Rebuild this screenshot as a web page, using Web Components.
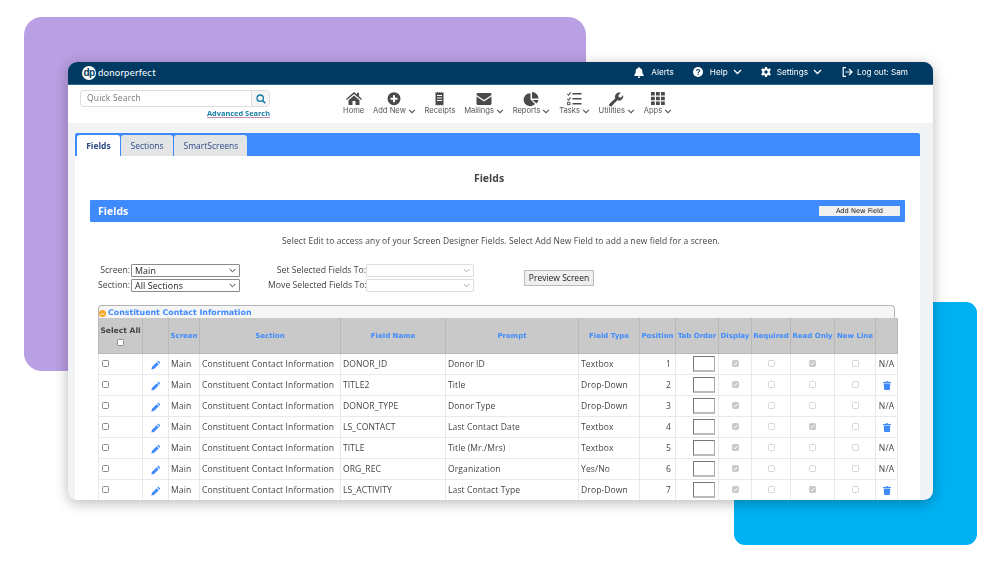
<!DOCTYPE html>
<html>
<head>
<meta charset="utf-8">
<title>Fields</title>
<style>
  html, body { margin: 0; padding: 0; background: #fff; }
  body { width: 1000px; height: 562px; overflow: hidden; font-family: "Open Sans", sans-serif; }
</style>
</head>
<body>
<dp-stage>
  <dp-window>
    <dp-topbar slot="top"></dp-topbar>
    <dp-header slot="head"></dp-header>
    <dp-panel>
      <dp-form></dp-form>
      <dp-fields-table></dp-fields-table>
    </dp-panel>
  </dp-window>
</dp-stage>

<script>
const chevron = `<svg class="chev" width="9" height="6" viewBox="0 0 9 6"><path d="M1 1l3.5 3.5L8 1" fill="none" stroke="currentColor" stroke-width="1.3"/></svg>`;

customElements.define("dp-stage", class extends HTMLElement {
  constructor() {
    super();
    this.attachShadow({ mode: "open" }).innerHTML = `
<style>
:host { display: block; position: relative; width: 1000px; height: 562px; overflow: hidden; background: #fff; }
.purple { position: absolute; left: 24px; top: 17px; width: 562px; height: 354px; border-radius: 18px; background: #b99fe3; }
.blue { position: absolute; left: 734px; top: 302px; width: 243px; height: 243px; border-radius: 11px; background: #00b1f2; }
.win { position: absolute; left: 68px; top: 62px; }
</style>
<div class="purple"></div>
<div class="blue"></div>
<div class="win"><slot></slot></div>`;
  }
});

customElements.define("dp-window", class extends HTMLElement {
  constructor() {
    super();
    this.attachShadow({ mode: "open" }).innerHTML = `
<style>
:host { display: flex; flex-direction: column; width: 865px; height: 438px; background: #f2f3f5; border-radius: 9px; overflow: hidden; box-shadow: 0 3px 14px rgba(0,0,0,.28); }
.body { flex: 1; min-height: 0; padding: 10px 13px 0 7px; overflow: hidden; filter: blur(.3px); }
</style>
<slot name="top"></slot>
<slot name="head"></slot>
<div class="body"><slot></slot></div>`;
  }
});

customElements.define("dp-topbar", class extends HTMLElement {
  constructor() {
    super();
    this.attachShadow({ mode: "open" }).innerHTML = `
<style>
:host { display: flex; align-items: center; height: 23px; background: #003a63; color: #fff; font: 8.2px Inter, "Liberation Sans", sans-serif; padding: 0 25px 2px 14px; border-bottom: 1px solid #2a6a92; box-sizing: border-box; }
.logo { width: 14px; height: 14px; margin-top: 1px; border-radius: 50%; background: #fff; color: #003a63; font: bold 10px/13px "Liberation Sans", sans-serif; letter-spacing: -.6px; text-align: center; }
.name { margin-left: 2px; font: 9.5px Lato, sans-serif; letter-spacing: .25px; flex: 1; }
.item { display: flex; align-items: center; filter: blur(.25px); }
.item svg:first-child { margin-right: 7px; }
.chev { margin-left: 5px; }
</style>
<span class="logo">dp</span><span class="name">donorperfect</span>
<span class="item" style="margin-right:19px"><svg width="10" height="11" viewBox="0 0 10 11"><path fill="#fff" d="M5 0c.5 0 .8.4.8.9C7.300 1.200 8.300 2.500 8.300 4c0 2.600.7 3.300 1.500 4.100V9H.2v-.9C1 7.300 1.700 6.600 1.700 4c0-1.500 1-2.800 2.500-3.100C4.200.4 4.500 0 5 0zM3.800 9.500h2.400C6.200 10.300 5.700 11 5 11s-1.200-.7-1.200-1.500z"/></svg>Alerts</span>
<span class="item" style="margin-right:19px"><svg width="10" height="10" viewBox="0 0 10 10"><circle cx="5" cy="5" r="5" fill="#fff"/><path d="M3.500 3.900C3.600 3 4.200 2.500 5.100 2.500s1.500.5 1.500 1.300c0 1.100-1.500 1.100-1.500 2.200" fill="none" stroke="#003a63" stroke-width="1.100"/><rect x="4.500" y="6.700" width="1.200" height="1.200" fill="#003a63"/></svg>Help${chevron}</span>
<span class="item" style="margin-right:20px"><svg width="10" height="10" viewBox="0 0 10 10" style="margin-right:6px"><path fill="#fff" fill-rule="evenodd" d="M4 0h2l.3 1.500 1 .5L8.700 1.300 10 3 8.800 4v1.900L10 7 8.700 8.700 7.300 8l-1 .5L6 10H4l-.3-1.500-1-.5-1.400.7L0 7l1.200-1.100V4L0 3l1.300-1.700L2.700 2l1-.5zM5 3.300a1.700 1.700 0 100 3.400 1.700 1.700 0 000-3.400z"/></svg>Settings${chevron}</span>
<span class="item"><svg width="11" height="10" viewBox="0 0 11 10" style="margin-right:4px"><path d="M4 .7H1.200v8.600H4M3.500 5H10M7 2l3 3-3 3" fill="none" stroke="#fff" stroke-width="1.200"/></svg>Log out: Sam</span>`;
  }
});

const icons = {
  home: `<path d="M8 0l3 2.500V.8h2v3.400L16 7l-.8.9L8 1.900.8 7.900 0 7zM2.500 8.200L8 3.500l5.500 4.700V13H9.500V9h-3v4h-4z"/>`,
  plus: `<path fill-rule="evenodd" d="M7.500 0a6.500 6.500 0 110 13 6.500 6.500 0 010-13zM6.500 3v2.500H4v2h2.500V10h2V7.500H11v-2H8.500V3z" transform="translate(.5 .2)"/>`,
  receipt: `<path fill-rule="evenodd" d="M2 0l1 .8L4 0l1 .8L6 0l1 .8L8 0l1 .8L10 0v13.500l-1-.8-1 .8-1-.8-1 .8-1-.8-1 .8-1-.8-1 .8zM3.500 3v1h5V3zm0 2.500v1h5v-1zm0 2.500v1h5V8z" transform="translate(1.500 0)"/>`,
  mail: `<path d="M0 1.500C0 .7.700 0 1.500 0h12C14.300 0 15 .7 15 1.500v.4L7.500 7 0 1.900zM0 3.500l7.500 5 7.500-5v7c0 .8-.7 1.500-1.500 1.500h-12C.7 12 0 11.300 0 10.500z" transform="translate(.5 1)"/>`,
  pie: `<path d="M6.500 1.200v6.300l4.500 4.500A6.500 6.500 0 116.500 1.200zM8 0a6.500 6.500 0 016.500 6.500H8zM8.500 8H14.500a6.500 6.500 0 01-2 3.500z"/>`,
  tasks: `<path d="M5.500 1h9v1.500h-9zM5.500 6h9v1.500h-9zM5.500 11h9v1.500h-9zM.5 1.500l1 1L3.300 0l.8.700L1.600 4 0 2.300zM.5 6.500l1 1L3.300 5l.8.700L1.600 9 0 7.300z"/><rect x=".6" y="10.300" width="2.400" height="2.400" fill="none" stroke="currentColor" stroke-width=".9"/>`,
  wrench: `<path d="M14.300 3.200l-2.500 2.400-2-.4-.4-2L11.800.8C10.200.2 8.400.5 7.200 1.800 6 3 5.700 4.700 6.300 6.200L.6 11.800c-.7.700-.7 1.700 0 2.200.6.600 1.500.6 2.100 0l5.700-5.700c1.500.6 3.200.3 4.400-.9 1.300-1.200 1.600-2.700 1.500-4.200z"/>`,
  apps: `<path d="M0 0h3.800v3.500H0zM5 0h3.800v3.500H5zM10 0h3.800v3.500H10zM0 4.700h3.800v3.600H0zM5 4.700h3.800v3.600H5zM10 4.700h3.800v3.600H10zM0 9.500h3.800V13H0zM5 9.500h3.800V13H5zM10 9.500h3.800V13H10z" transform="translate(1 0)"/>`
};

customElements.define("dp-nav-item", class extends HTMLElement {
  constructor() {
    super();
    const menu = this.hasAttribute("menu") ? chevron : "";
    this.attachShadow({ mode: "open" }).innerHTML = `
<style>
:host { display: flex; flex-direction: column; align-items: center; color: #555; font: 7.6px Inter, "Liberation Sans", sans-serif; }
.ic { height: 14px; display: flex; align-items: center; }
svg.i { fill: #4a4a4a; color: #4a4a4a; overflow: visible; }
.lb { display: flex; align-items: center; white-space: nowrap; line-height: 10px; }
.chev { margin-left: 2px; width: 8px; height: 5px; }
</style>
<div class="ic"><svg class="i" width="16" height="14" viewBox="0 0 16 14">${icons[this.getAttribute("icon")]}</svg></div>
<div class="lb"><slot></slot>${menu}</div>`;
  }
});

customElements.define("dp-header", class extends HTMLElement {
  constructor() {
    super();
    this.attachShadow({ mode: "open" }).innerHTML = `
<style>
:host { display: flex; height: 38px; background: #fff; padding: 5px 0 0 12px; box-sizing: border-box; filter: blur(.3px); }
.search { width: 190px; }
.box { display: flex; height: 17px; border: 1px solid #ddd; border-radius: 4px; box-sizing: border-box; overflow: hidden; font: 8.5px "Open Sans", sans-serif; color: #777; letter-spacing: .2px; }
.q { flex: 1; padding-left: 6px; line-height: 14px; }
.btn { width: 17px; background: #f5f5f5; border-left: 1px solid #ddd; display: flex; align-items: center; justify-content: center; }
.adv { text-align: right; font: bold 7.4px/9px "Open Sans", sans-serif; color: #167ca5; text-decoration: underline; text-decoration-color: #c98ab0; margin-top: 2px; }
nav { display: flex; gap: 8.7px; margin-left: 73px; align-items: flex-start; padding-top: 2px; }
</style>
<div class="search">
  <div class="box"><div class="q">Quick Search</div><div class="btn"><svg width="10" height="10" viewBox="0 0 10 10"><circle cx="4.200" cy="4.200" r="3.200" fill="none" stroke="#167ca5" stroke-width="1.300"/><path d="M6.600 6.600L9.300 9.300" stroke="#167ca5" stroke-width="1.500"/></svg></div></div>
  <div class="adv">Advanced Search</div>
</div>
<nav>
  <dp-nav-item icon="home">Home</dp-nav-item>
  <dp-nav-item icon="plus" menu>Add New</dp-nav-item>
  <dp-nav-item icon="receipt">Receipts</dp-nav-item>
  <dp-nav-item icon="mail" menu>Mailings</dp-nav-item>
  <dp-nav-item icon="pie" menu>Reports</dp-nav-item>
  <dp-nav-item icon="tasks" menu>Tasks</dp-nav-item>
  <dp-nav-item icon="wrench" menu>Utilities</dp-nav-item>
  <dp-nav-item icon="apps" menu>Apps</dp-nav-item>
</nav>`;
  }
});

customElements.define("dp-panel", class extends HTMLElement {
  constructor() {
    super();
    this.attachShadow({ mode: "open" }).innerHTML = `
<style>
:host { display: block; background: #fff; height: 100%; font-family: "Open Sans", sans-serif; }
.tabs { display: flex; gap: 1.5px; height: 23px; background: #3f8bfd; padding: 2px 0 0 2px; box-sizing: border-box; border-radius: 2px 2px 0 0; font-size: 8.5px; color: #2b4a86; }
.tab { background: #e3e4e6; padding: 0 9.2px; line-height: 21px; border-radius: 3px 3px 0 0; }
.tab.on { background: #fff; font-weight: 700; }
h1 { margin: 0; padding: 15px 17px 15px 0; height: 14px; font-size: 10.5px; line-height: 14px; font-weight: 700; color: #444; text-align: center; }
.bar { display: flex; align-items: center; justify-content: space-between; margin: 0 15px; height: 22px; background: #3f8bfd; color: #fff; font-size: 10.5px; font-weight: 700; padding: 0 5px 0 8px; box-sizing: border-box; border-radius: 1px; }
.add { width: 81px; height: 10px; background: #f0f0f0; color: #222; font: 6.7px/10px "DejaVu Sans", sans-serif; text-align: center; }
p { margin: 0; padding-top: 13px; height: 28px; box-sizing: border-box; font-size: 8.47px; line-height: 12px; color: #444; text-align: center; padding-left: 7px; letter-spacing: .1px; white-space: nowrap; }
</style>
<div class="tabs"><div class="tab on">Fields</div><div class="tab">Sections</div><div class="tab">SmartScreens</div></div>
<h1>Fields</h1>
<div class="bar"><span>Fields</span><span class="add">Add New Field</span></div>
<p>Select Edit to access any of your Screen Designer Fields. Select Add New Field to add a new field for a screen.</p>
<slot></slot>`;
  }
});

customElements.define("dp-form", class extends HTMLElement {
  constructor() {
    super();
    const sel = (t, off) => `<span class="sel${off ? " off" : ""}">${t}<svg width="7" height="5" viewBox="0 0 7 5"><path d="M.7 1l2.800 2.800L6.300 1" fill="none" stroke="${off ? "#aaa" : "#333"}" stroke-width="1"/></svg></span>`;
    this.attachShadow({ mode: "open" }).innerHTML = `
<style>
:host { display: flex; margin-top: 14px; height: 41px; font: 8.7px "Open Sans", sans-serif; color: #444; }
.col { display: grid; row-gap: 2px; align-content: start; align-items: center; column-gap: 1px; }
.a { margin-left: 14px; grid-template-columns: 41px 109px; }
.b { margin-left: 28px; grid-template-columns: 98px 108px; column-gap: 0; }
label { text-align: right; white-space: nowrap; line-height: 13px; }
.sel { display: flex; align-items: center; height: 13px; box-sizing: border-box; border: 1px solid #8a8a8a; border-radius: 1px; padding: 0 3px; color: #222; background: #fff; font-size: 8.9px; letter-spacing: .1px; }
.sel svg { margin-left: auto; }
.sel.off { border-color: #ddd; }
.prev { margin: 6px 0 0 50px; width: 70px; height: 16px; box-sizing: border-box; border: 1px solid #bbb; background: #efefef; color: #222; font: 8.5px/14px "Open Sans", sans-serif; text-align: center; white-space: nowrap; }
</style>
<div class="col a"><label>Screen:</label>${sel("Main")}<label>Section:</label>${sel("All Sections")}</div>
<div class="col b"><label>Set Selected Fields To:</label>${sel("", 1)}<label>Move Selected Fields To:</label>${sel("", 1)}</div>
<div class="prev">Preview Screen</div>`;
  }
});

const rows = [
  ["DONOR_ID", "Donor ID", "Textbox", 1, [1, 0, 1, 0], 0],
  ["TITLE2", "Title", "Drop-Down", 2, [1, 0, 0, 0], 1],
  ["DONOR_TYPE", "Donor Type", "Drop-Down", 3, [1, 0, 0, 0], 0],
  ["LS_CONTACT", "Last Contact Date", "Textbox", 4, [1, 0, 1, 0], 1],
  ["TITLE", "Title (Mr./Mrs)", "Textbox", 5, [1, 0, 0, 0], 0],
  ["ORG_REC", "Organization", "Yes/No", 6, [1, 0, 0, 0], 0],
  ["LS_ACTIVITY", "Last Contact Type", "Drop-Down", 7, [1, 0, 1, 0], 1]
];
const pencil = `<svg width="10" height="10" viewBox="0 0 10 10"><path fill="#3f8bfd" d="M7.300.6l2.100 2.100-1 1-2.100-2.100zM5.700 2.200l2.100 2.100L3 9.100.4 9.600.9 7z"/></svg>`;
const trash = `<svg width="8" height="9" viewBox="0 0 8 9"><path fill="#3f8bfd" d="M0 1h2.500L3 .2h2l.5.800H8v1H0zM.7 2.600h6.600L6.800 9H1.200z"/></svg>`;
const check = (on) => `<span class="cb${on ? " on" : ""}">${on ? `<svg width="5" height="5" viewBox="0 0 7 7"><path d="M1 3.500l1.800 1.900L6 1.500" fill="none" stroke="#fff" stroke-width="1.400"/></svg>` : ""}</span>`;

customElements.define("dp-fields-table", class extends HTMLElement {
  constructor() {
    super();
    const widths = [44, 26, 31, 141, 105, 133, 61, 36, 43, 33, 39, 44, 41, 22];
    const heads = ["", "", "Screen", "Section", "Field Name", "Prompt", "Field Type", "Position", "Tab Order", "Display", "Required", "Read Only", "New Line", ""];
    const body = rows.map(([name, prompt, type, pos, flags, del]) => `<tr>
<td class="c"><span class="sq"></span></td><td class="m">${pencil}</td><td>Main</td><td>Constituent Contact Information</td><td>${name}</td><td>${prompt}</td><td>${type}</td><td class="r">${pos}</td>
<td class="t"><span class="in"></span></td>${flags.map((f) => `<td class="m">${check(f)}</td>`).join("")}<td class="m">${del ? trash : "N/A"}</td></tr>`).join("");
    this.attachShadow({ mode: "open" }).innerHTML = `
<style>
:host { display: block; margin-left: 23px; width: 799px; font-family: "Open Sans", sans-serif; }
.group { height: 13px; width: 797px; box-sizing: border-box; border: 1px solid #b5b5b5; border-bottom: 0; border-radius: 4px 4px 0 0; background: #f5f5f5; display: flex; align-items: center; padding: 1px 0 0 0; font: bold 7.85px "DejaVu Sans", sans-serif; color: #3f8bfd; white-space: nowrap; }
.dot { width: 7px; height: 7px; margin: 2px 2px 0 0; border-radius: 50%; background: #f5a623; display: flex; align-items: center; justify-content: center; }
table { border-collapse: collapse; table-layout: fixed; width: 799px; font-size: 8.55px; color: #444; border-left: 1px solid #b5b5b5; border-right: 1px solid #b5b5b5; }
th { height: 34px; padding: 1px 0 0; background: #c9c9c9; border: 1px solid #b8b8b8; border-top: 0; font: bold 7px "DejaVu Sans", sans-serif; color: #3f8bfd; text-align: center; white-space: nowrap; overflow: hidden; }
th.all { color: #444; font-size: 7.6px; line-height: 11px; padding: 0 0 1px; }
th.all .sq { display: block; margin: 3px auto 0; background: #fff; }
td { height: 20px; padding: 0 2px; border: 1px solid #e9e9e9; white-space: nowrap; overflow: hidden; letter-spacing: .1px; }
td.c { padding-left: 3px; }
td.m { text-align: center; padding: 0; }
td.m svg { vertical-align: middle; }
td.r { text-align: right; padding-right: 4px; }
td.t { text-align: right; padding: 0 2px 0 0; }
.sq { display: inline-block; box-sizing: border-box; width: 7px; height: 7px; border: 1px solid #8a8a8a; border-radius: 1.5px; background: #fff; vertical-align: middle; margin-bottom: 2px; }
.in { display: inline-block; width: 22px; height: 16px; box-sizing: border-box; border: 1px solid #777; border-bottom: 2px solid #bbb; border-right-color: #aaa; vertical-align: middle; margin-right: 1px; }
.cb { display: inline-flex; box-sizing: border-box; width: 7px; height: 7px; border: 1px solid #d5d5d5; border-radius: 1.5px; background: #fff; vertical-align: middle; margin-bottom: 2px; line-height: 0; }
.cb.on { background: #c9c9c9; border-color: #c9c9c9; }
.cb svg { vertical-align: top; }
</style>
<div class="group"><span class="dot"><svg width="5" height="4" viewBox="0 0 5 4"><path d="M.7 3L2.500 1.200 4.300 3" fill="none" stroke="#fff" stroke-width="1"/></svg></span>Constituent Contact Information</div>
<table>
<colgroup>${widths.map((w) => `<col style="width:${w}px">`).join("")}</colgroup>
<thead><tr>${heads.map((h, i) => i === 0 ? `<th class="all">Select All<span class="sq"></span></th>` : `<th>${h}</th>`).join("")}</tr></thead>
<tbody>${body}</tbody>
</table>`;
  }
});
</script>
</body>
</html>
